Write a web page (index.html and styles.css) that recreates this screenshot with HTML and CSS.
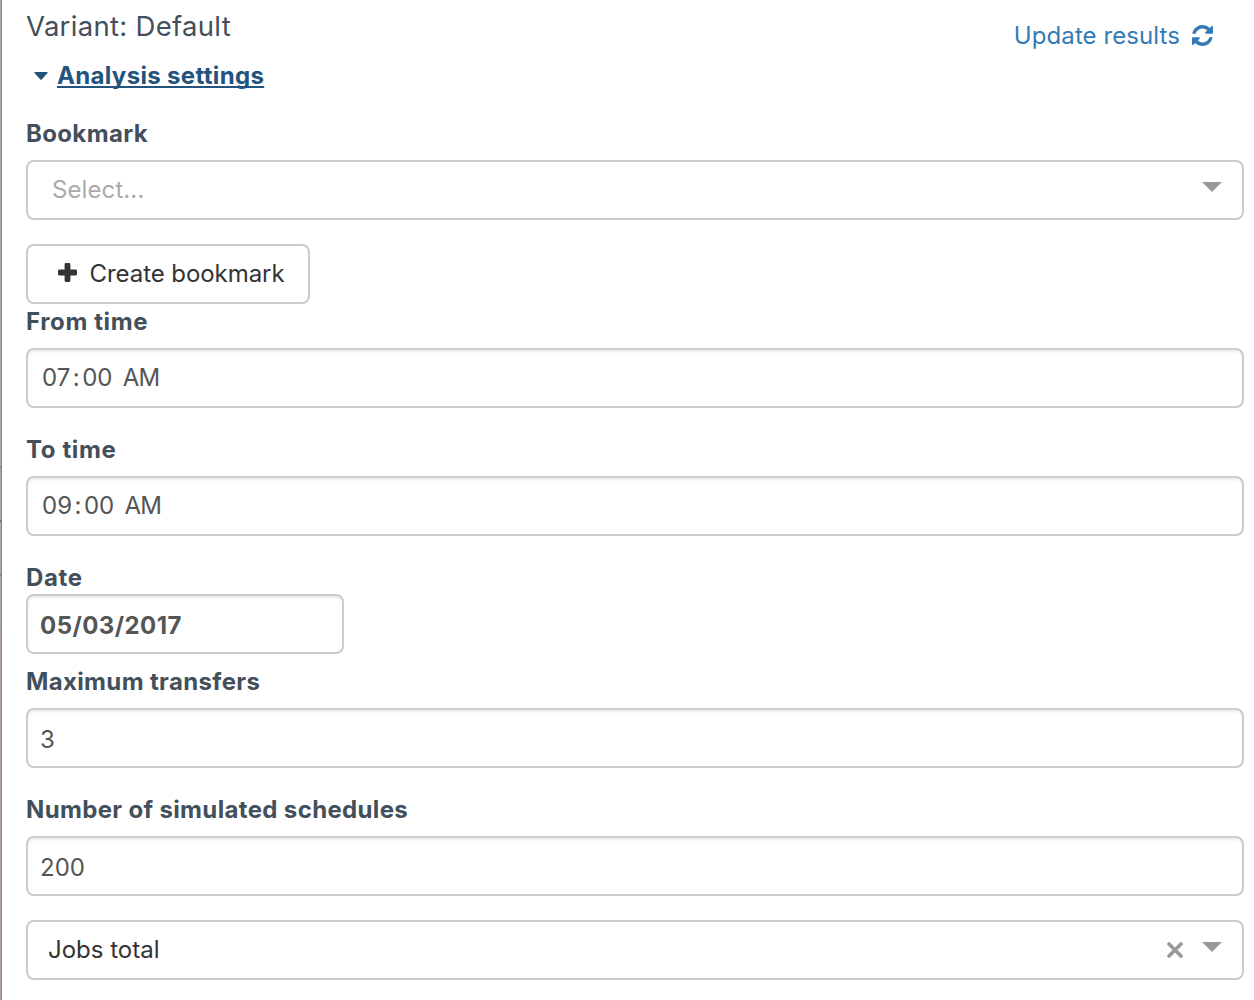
FILE: index.html
```html
<!DOCTYPE html>
<html lang="en">
<head>
<meta charset="utf-8">
<title>Analysis settings</title>
<link rel="stylesheet" href="styles.css">
</head>
<body>
<div class="app">
  <div class="map-edge"></div>
  <main class="panel">
    <header class="header">
      <div>
        <h1 class="title">Variant: Default</h1>
        <a class="toggle"><svg class="toggle-caret" width="14" height="8" viewBox="0 0 14 8"><path d="M1 0H13Q14.200 0 13.500 1L7.700 7.400Q7 8 6.300 7.400L.5 1Q-.2 0 1 0Z" fill="currentColor"/></svg><span class="toggle-text">Analysis settings</span></a>
      </div>
      <a class="update"><span class="update-text">Update results</span><svg class="refresh" width="21" height="21" viewBox="0 0 1536 1536"><path fill="currentColor" d="M1511 928q0 5-1 7-64 268-268 434.500T764 1536q-146 0-282.500-55T238 1324l-129 129q-19 19-45 19t-45-19-19-45V960q0-26 19-45t45-19h448q26 0 45 19t19 45-19 45l-137 137q71 66 161 102t187 36q134 0 250-65t186-179q11-17 53-117 8-23 30-23h192q13 0 22.500 9.500t9.500 22.500zm25-800v448q0 26-19 45t-45 19h-448q-26 0-45-19t-19-45 19-45l138-138Q969 256 768 256q-134 0-250 65T332 500q-11 17-53 117-8 23-30 23H50q-13 0-22.500-9.500T18 608v-7q65-268 270-434.500T768 0q146 0 284 55.500T1297 212l130-129q19-19 45-19t45 19 19 45z"/></svg></a>
    </header>

    <label class="label">Bookmark</label>
    <div class="select"><span class="placeholder">Select...</span><span class="arrow"></span></div>
    <button class="button" type="button"><svg class="plus" width="19" height="19" viewBox="0 0 19 19"><path fill="currentColor" d="M8 0h3q1.400 0 1.400 1.400v5.200h5.200q1.400 0 1.400 1.400v3q0 1.400-1.400 1.400h-5.200v5.200q0 1.400-1.400 1.400H8q-1.400 0-1.400-1.400v-5.200H1.400Q0 12.400 0 11V8q0-1.400 1.400-1.400h5.200V1.400Q6.600 0 8 0z"/></svg><span class="button-text">Create bookmark</span></button>

    <label class="label short">From time</label>
    <div class="input time"><span>07<span class="colon">:</span>00 <span class="meridiem">AM</span></span></div>

    <label class="label short spaced">To time</label>
    <div class="input time"><span>09<span class="colon">:</span>00 <span class="meridiem">AM</span></span></div>

    <label class="label short spaced tight">Date</label>
    <div class="input date"><span>05/03/2017</span></div>

    <label class="label after-date">Maximum transfers</label>
    <div class="input"><span>3</span></div>

    <label class="label spaced">Number of simulated schedules</label>
    <div class="input"><span>200</span></div>

    <div class="select chosen"><span class="value">Jobs total</span><svg class="clear" width="16" height="16" viewBox="0 0 16 16"><path d="M2 2L14 14M14 2L2 14" stroke="currentColor" stroke-width="3.600" stroke-linecap="round"/></svg><span class="arrow"></span></div>
  </main>
</div>
</body>
</html>
```
FILE: styles.css
```css
* { box-sizing: border-box; }

body {
  margin: 0;
  background: #fff;
  color: #434f5b;
  font: 24px/34px Inter, "Liberation Sans", sans-serif;
}

.app { display: flex; height: 1000px; overflow: hidden; }

.map-edge {
  width: 2px;
  background: linear-gradient(#aaa 0 466px, #8a8a8a 466px 468px, #aaa 468px 520px, #6c6c6c 520px 522px, #aaa 522px 574px, #8a8a8a 574px 576px, #aaa 576px 628px, #b3a3a5 628px);
  border-right: 1px solid #858585;
}

.panel { flex: 1; padding: 0 10px 0 24px; }

.header { display: flex; justify-content: space-between; height: 116px; }

.title {
  margin: 9px 0 16px;
  font-size: 27.500px;
  font-weight: 400;
  letter-spacing: .3px;
}

.toggle { display: flex; align-items: center; gap: 9px; padding-left: 8px; color: #23527c; font-weight: 700; letter-spacing: .33px; }
.toggle-text { text-decoration: underline; text-decoration-thickness: 2px; text-underline-offset: 2px; text-decoration-skip-ink: none; }

.update { display: flex; align-items: center; align-self: flex-start; gap: 12px; margin: 19px 31px 0 0; color: #337ab7; letter-spacing: .08px; }
.refresh { margin-bottom: 2px; }

.label { display: block; height: 34px; padding-top: 1px; margin-bottom: 10px; font-weight: 700; letter-spacing: .35px; white-space: nowrap; }
.short { letter-spacing: .62px; }
.spaced { margin-top: 24px; }
.tight { margin-bottom: 0; }
.after-date { margin-top: 10px; }

.input, .select {
  display: flex;
  align-items: center;
  height: 60px;
  border: 2px solid #ccc;
  border-radius: 8px;
  background: #fff;
}
.input { padding: 4px 12px 0; color: #555; box-shadow: inset 0 2px 2px rgba(0, 0, 0, .075); }
.time { padding: 0 14px; }
.colon { margin: 0 2.500px; }
.meridiem { margin-left: 3.500px; letter-spacing: -.7px; }
.date { width: 318px; font-weight: 700; letter-spacing: .45px; }

.select { padding: 0 20px 0 24px; color: #333; }
.placeholder { color: #aaa; letter-spacing: .1px; }
.arrow { margin: -6px 0 0 auto; border: 10px solid transparent; border-top-color: #999; border-bottom: 0; }
.chosen { margin-top: 24px; padding-left: 20px; }
.clear { margin-left: auto; color: #999; }
.clear + .arrow { margin-left: 19px; }

.button {
  display: flex;
  align-items: center;
  gap: 12.500px;
  width: 284px;
  height: 60px;
  margin: 24px 0 0;
  padding: 0 0 0 30px;
  border: 2px solid #ccc;
  border-radius: 8px;
  background: #fff;
  color: #333;
  font: inherit;
  letter-spacing: -.06px;
  white-space: nowrap;
}
.plus { margin-bottom: 3px; }
```
